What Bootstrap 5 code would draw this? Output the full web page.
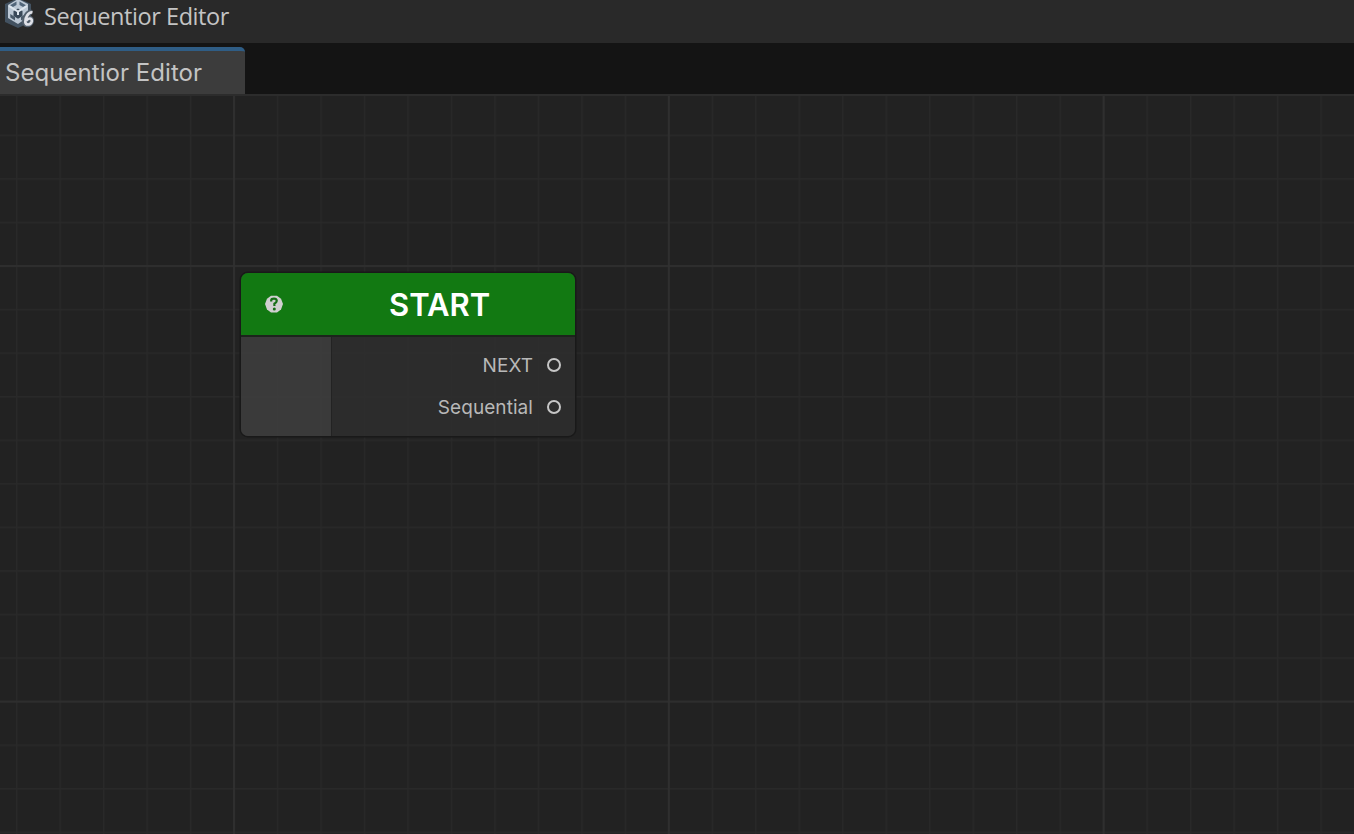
<!DOCTYPE html>
<html lang="en">
<head>
<meta charset="utf-8">
<meta name="viewport" content="width=device-width, initial-scale=1">
<title>Sequentior Editor</title>
<link href="https://cdn.jsdelivr.net/npm/bootstrap@5.3.0/dist/css/bootstrap.min.css" rel="stylesheet">
<style>
body { background: #222; color: #c4c4c4; font-family: Inter, "Liberation Sans", sans-serif; }
.title-bar { height: 43px; background: #292929; padding: 0 0 11px 4px; }
.title-text { font: 23.500px/32px "Open Sans", "Noto Sans", sans-serif; margin-left: 9px; letter-spacing: -.42px; }
.tab-strip { height: 53px; background: #141414; border-bottom: 2px solid #2c2c2c; padding-top: 4px; }
.editor-tab { width: 245px; background: #3c3c3c; border-top: 4px solid #2f5d85; border-radius: 0 5px 0 0; padding: 1px 0 0 5px; font-size: 24px; line-height: 1; letter-spacing: .05px; }
.graph-node { left: 241px; top: 177px; width: 334px; height: 162.500px; border-radius: 7px; box-shadow: 0 0 0 1.5px #191919; background: rgba(46,46,46,.84); overflow: hidden; }
.node-head { height: 62px; background: #127912; }
.node-title { font-size: 31px; font-weight: 600; color: #fff; left: 148px; line-height: 64px; }
.node-body { height: 100.500px; border-top: 2px solid #1c241c; }
.node-inputs { width: 91px; background: rgba(63,63,63,.8); border-right: 1px solid #232323; }
.node-outputs { padding: 7px 14px 0 0; font-size: 19px; letter-spacing: .06px; color: #b8b8b8; }
.port-row { height: 42px; gap: 14px; }
.port-row span:first-child { padding-top: 2px; }
.port-ring { width: 14px; height: 14px; border: 2px solid #c6c6c6; border-radius: 50%; }
</style>
</head>
<body class="vh-100 d-flex flex-column overflow-hidden">
<header class="title-bar d-flex align-items-center flex-shrink-0">
  <svg width="31" height="32" viewBox="0 0 31 32" class="flex-shrink-0">
    <path d="M14 -2 27 4v18L14 28 1 22V4z" fill="#435261"/>
    <path d="M14 -1 24 4v13l-10 7L4 18V5z" fill="#bcc8d5"/>
    <path d="M12.500 1.500v3.500L9 7 6 5.300zM15.500 1.500v3.500L19 7 22 5.300z" fill="#52667a"/>
    <path d="M14 8.500 18.500 11v5L14 18.700 9.500 16v-5z" fill="#394858"/>
    <path d="M6.300 14 11 17v3.500l-4.700-3zM21.700 14 17 17v3.500l4.700-3z" fill="#4a5a6a"/>
    <path d="M5 6l9 5.500L23 6M14 11v4" stroke="#dde5ed" stroke-width="2" fill="none"/>
    <path d="M28 12.500C23.500 11.500 20 18 20.500 22c.5 4 6 3.500 7-.8.500-4-4-4-6-.5" fill="none" stroke="#53606d" stroke-width="5"/>
    <path d="M28.500 12.500C24.500 11.500 21 18 21.300 22c.5 3.700 5.700 3.200 6.500-.8.500-3.500-3.700-3.500-5.700-.5" fill="none" stroke="#dfe1e8" stroke-width="2.700"/>
  </svg>
  <span class="title-text">Sequentior Editor</span>
</header>
<nav class="tab-strip d-flex flex-shrink-0">
  <div class="editor-tab d-flex align-items-center">Sequentior Editor</div>
</nav>
<main class="flex-grow-1 position-relative overflow-hidden">
  <svg class="d-block w-100 h-100">
    <defs>
      <pattern id="minor" x="16" y="38.600" width="43.480" height="43.560" patternUnits="userSpaceOnUse"><path d="M.7 0V44M0 .7H44" stroke="#292929" stroke-width="1.400"/></pattern>
      <pattern id="major" x="233" y="169" width="434.800" height="435.600" patternUnits="userSpaceOnUse"><path d="M1 0V436M0 1H435" stroke="#303030" stroke-width="1.700"/></pattern>
    </defs>
    <rect width="100%" height="100%" fill="url(#minor)"/>
    <rect width="100%" height="100%" fill="url(#major)"/>
  </svg>
  <section class="graph-node position-absolute">
    <div class="node-head position-relative">
      <svg class="position-absolute" style="left:23px;top:22px" width="20" height="19" viewBox="0 0 20 19">
        <path d="M7 .8h6l4 3L19 9l-2 5.500-4 3H7l-4-3L1 9l2-5.200z" fill="#d0d0d0"/>
        <path d="M7.200 6.500V5.200Q7.500 3.700 10 3.700T12.800 5.800Q12.800 7.200 10.400 8.700V11" fill="none" stroke="#176f17" stroke-width="2.200"/>
        <circle cx="10.300" cy="14" r="1.500" fill="#176f17"/>
      </svg>
      <div class="node-title position-absolute">START</div>
    </div>
    <div class="node-body d-flex">
      <div class="node-inputs"></div>
      <div class="node-outputs flex-grow-1">
        <div class="port-row d-flex align-items-center justify-content-end"><span>NEXT</span><span class="port-ring"></span></div>
        <div class="port-row d-flex align-items-center justify-content-end"><span>Sequential</span><span class="port-ring"></span></div>
      </div>
    </div>
  </section>
</main>
<script src="https://cdn.jsdelivr.net/npm/bootstrap@5.3.0/dist/js/bootstrap.bundle.min.js"></script>
</body>
</html>
